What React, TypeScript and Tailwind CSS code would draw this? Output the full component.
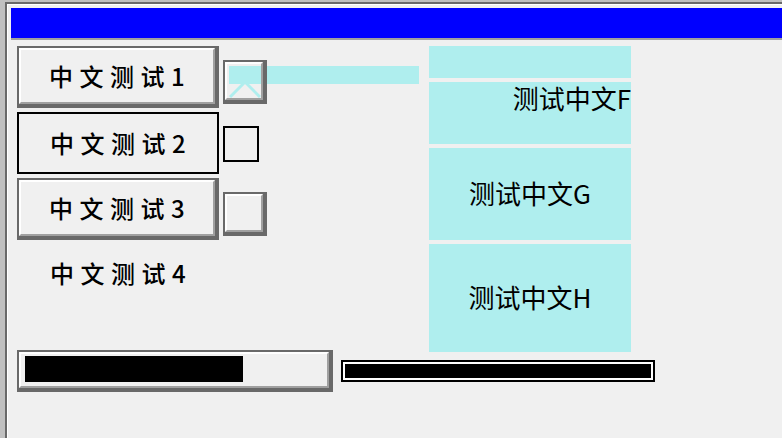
import React from 'react';

const cjk = { fontFamily: '"Noto Sans CJK SC", "Noto Sans", sans-serif' };

const Bevel: React.FC<{ className?: string; children?: React.ReactNode }> = ({ className = '', children }) => (
  <div className={`border-t-2 border-l-2 border-r-4 border-b-4 border-[#696969] ${className}`}>
    <div className="h-full w-full border-t-2 border-l-2 border-r-2 border-b-2 border-t-white border-l-white border-r-[#a0a0a0] border-b-[#a0a0a0]">
      {children}
    </div>
  </div>
);

const ButtonText: React.FC<{ label: string }> = ({ label }) => (
  <div className="flex h-full w-full items-center justify-center pl-[6px] text-[24px] font-medium tracking-[6.5px] text-black" style={cjk}>
    {label}
  </div>
);

const App: React.FC = () => {
  return (
    <div className="h-[438px] w-[782px] overflow-hidden bg-[#c0c0c0]">
      <div className="ml-[5px] mt-[2px] h-full border-l-2 border-t-2 border-[#696969] bg-[#f0f0f0]">
        <div className="h-full border-l border-t border-white pl-[3px] pt-[3px]">
          <div className="h-[30px] bg-[#0000ff]" />
          <div className="h-[2px] bg-[#a0a0a0]" />

          <div className="mt-[6px] flex h-[304px] items-start pl-[6px]">
            <div className="flex flex-col gap-[4px]">
              <div className="flex items-start gap-[4px]">
                <Bevel className="h-[62px] w-[202px]">
                  <ButtonText label="中文测试1" />
                </Bevel>
                <div className="relative mt-[14px] h-[44px] w-[44px]">
                  <svg className="absolute left-[6px] top-[6px]" width="32" height="32" viewBox="0 0 32 32">
                    <path d="M1 1 L31 31 M31 1 L1 31" stroke="#afeeee" strokeWidth="3" fill="none" />
                  </svg>
                  <div className="absolute left-[6px] top-[6px] h-[18px] w-[190px] bg-[#afeeee]" />
                  <Bevel className="pointer-events-none absolute inset-0" />
                </div>
              </div>

              <div className="flex items-start gap-[4px]">
                <div className="h-[62px] w-[202px] border-2 border-black">
                  <ButtonText label="中文测试2" />
                </div>
                <div className="mt-[14px] h-[36px] w-[36px] border-2 border-black" />
              </div>

              <div className="flex items-start gap-[4px]">
                <Bevel className="h-[62px] w-[202px]">
                  <ButtonText label="中文测试3" />
                </Bevel>
                <Bevel className="mt-[14px] h-[44px] w-[44px]" />
              </div>

              <div className="h-[58px] w-[202px]">
                <ButtonText label="中文测试4" />
              </div>
            </div>

            <div className="ml-[162px] flex w-[202px] flex-col gap-[4px]" style={cjk}>
              <div className="h-[32px] bg-[#afeeee]" />
              <div className="h-[62px] bg-[#afeeee] pt-[1px] text-right text-[26px] leading-[30px] text-black">测试中文F</div>
              <div className="flex h-[92px] items-center justify-center bg-[#afeeee] pb-[3px] text-[26px] text-black">测试中文G</div>
              <div className="flex h-[108px] items-center justify-center bg-[#afeeee] pb-[3px] text-[26px] text-black">测试中文H</div>
            </div>
          </div>

          <div className="flex items-center gap-[8px] pl-[6px]">
            <Bevel className="h-[42px] w-[316px]">
              <div className="px-[4px] pb-[2px] pt-[2px]">
                <div className="h-[26px] w-[218px] bg-black" />
              </div>
            </Bevel>
            <div className="h-[22px] w-[314px] border-2 border-black bg-white p-[2px]">
              <div className="h-full w-full bg-black" />
            </div>
          </div>
        </div>
      </div>
    </div>
  );
};

export default App;
